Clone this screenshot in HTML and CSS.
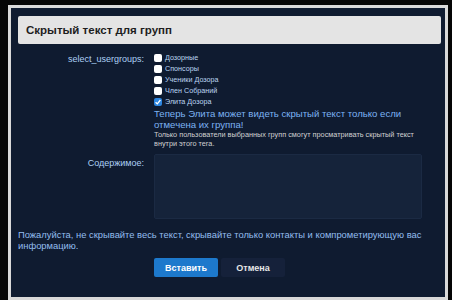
FILE: index.html
```html
<!DOCTYPE html>
<html>
<head>
    <meta charset="UTF-8">
    <title>Скрытый текст для групп</title>
    <link rel="stylesheet" href="styles.css">
</head>
<body>
    <div class="overlay">
        <div class="dialog">
            <h2 class="dialog-title">Скрытый текст для групп</h2>

            <div class="form-row groups-row">
                <label class="row-label">select_usergroups:</label>
                <div class="row-field">
                    <ul class="group-list">
                        <li><span class="check"></span>Дозорные</li>
                        <li><span class="check"></span>Спонсоры</li>
                        <li><span class="check"></span>Ученики Дозора</li>
                        <li><span class="check"></span>Член Собраний</li>
                        <li><span class="check checked"><svg viewBox="0 0 8 8" width="8" height="8"><path d="M1.6 4.2 L3.3 5.9 L6.4 2" fill="none" stroke="#fff" stroke-width="1.3"/></svg></span>Элита Дозора</li>
                    </ul>
                    <p class="notice">Теперь Элита может видеть скрытый текст только если отмечена их группа!</p>
                    <p class="hint">Только пользователи выбранных групп смогут просматривать скрытый текст внутри этого тега.</p>
                </div>
            </div>

            <div class="form-row content-row">
                <label class="row-label" for="content">Содержимое:</label>
                <div class="row-field">
                    <textarea id="content" class="content-box"></textarea>
                </div>
            </div>

            <p class="warning">Пожалуйста, не скрывайте весь текст, скрывайте только контакты и компрометирующую вас информацию.</p>

            <div class="buttons">
                <button class="btn btn-primary">Вставить</button>
                <button class="btn btn-cancel">Отмена</button>
            </div>
        </div>
    </div>
</body>
</html>
```

FILE: styles.css
```css
body {
    margin: 0;
    background: #050505;
    font-family: 'Liberation Sans', Arial, sans-serif;
    height: 300px;
    overflow: hidden;
}
.overlay {
    padding: 5px 4px 0 8px;
}
.dialog {
    width: 423px;
    height: 281px;
    border: 3px solid #d9d9d9;
    background: #0f1b30;
    padding: 8px 4px 0 7px;
}
.dialog-title {
    margin: 0;
    height: 28px;
    line-height: 28px;
    padding: 0 8px;
    background: #e4e4e4;
    border-radius: 2px;
    color: #1e1e1e;
    font-size: 11.5px;
    font-weight: bold;
}
.form-row {
    display: flex;
    gap: 10px;
}
.row-label {
    width: 126px;
    text-align: right;
    color: #add0f5;
    font-size: 9px;
    line-height: 10px;
    flex-shrink: 0;
}
.row-field {
    width: 268px;
}
.groups-row {
    margin-top: 8px;
}
.groups-row .row-label {
    padding-top: 2px;
}
.group-list {
    list-style: none;
    margin: 0;
    padding: 0;
}
.group-list li {
    display: flex;
    align-items: center;
    height: 11px;
    font-size: 7.2px;
    color: #bcd5f2;
}
.check {
    display: inline-flex;
    align-items: center;
    justify-content: center;
    width: 8px;
    height: 8px;
    margin-right: 3px;
    background: #fff;
    border-radius: 2px;
}
.check.checked {
    background: #2d86e0;
}
.notice {
    margin: 1px 0 0;
    color: #7db3f3;
    font-size: 9.6px;
    line-height: 11px;
}
.hint {
    margin: 0;
    color: #d0d0d0;
    font-size: 7.3px;
    line-height: 9px;
}
.content-row {
    margin-top: 6px;
}
.content-row .row-label {
    padding-top: 4px;
}
.content-box {
    display: block;
    width: 268px;
    height: 65px;
    box-sizing: border-box;
    margin: 0;
    background: #15233a;
    border: 1px solid #1b2a43;
    border-radius: 2px;
    resize: none;
}
.warning {
    margin: 10px 0 0;
    padding: 0;
    color: #93bdee;
    font-size: 9.4px;
    line-height: 11px;
    width: 410px;
}
.buttons {
    display: flex;
    gap: 3px;
    margin: 7px 0 0 136px;
}
.btn {
    width: 64px;
    height: 19px;
    border: none;
    border-radius: 2px;
    font-family: inherit;
    font-size: 9px;
    font-weight: bold;
    padding: 0;
}
.btn-primary {
    background: #1d79cc;
    color: #fff;
}
.btn-cancel {
    background: #15213a;
    color: #e6e6e6;
}
```
